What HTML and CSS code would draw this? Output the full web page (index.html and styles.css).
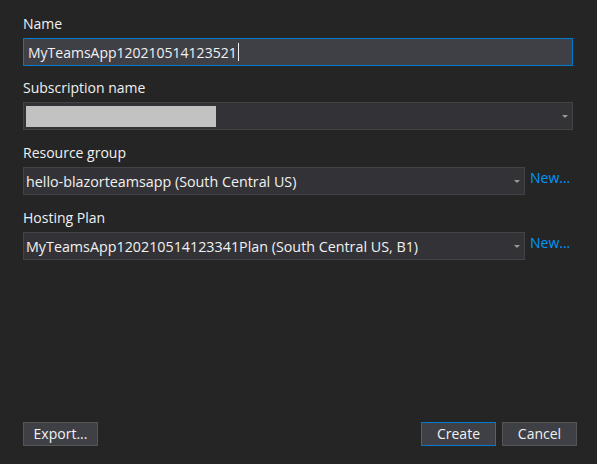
FILE: index.html
```html
<!DOCTYPE html>
<html lang="en">
<head>
<meta charset="utf-8">
<title>Create App Service</title>
<link rel="stylesheet" href="styles.css">
</head>
<body>
<div class="dialog">
  <div class="fields">
    <div class="field">
      <label class="label">Name</label>
      <div class="textbox"><span class="value">MyTeamsApp120210514123521</span><span class="caret"></span></div>
    </div>
    <div class="field">
      <label class="label">Subscription name</label>
      <div class="row">
        <div class="combo combo-wide">
          <span class="redacted"></span>
          <span class="arrow"></span>
        </div>
      </div>
    </div>
    <div class="field field-spaced">
      <label class="label">Resource group</label>
      <div class="row">
        <div class="combo">
          <span class="value">hello-blazorteamsapp (South Central US)</span>
          <span class="arrow"></span>
        </div>
        <a class="link">New...</a>
      </div>
    </div>
    <div class="field field-spaced">
      <label class="label">Hosting Plan</label>
      <div class="row">
        <div class="combo">
          <span class="value">MyTeamsApp120210514123341Plan (South Central US, B1)</span>
          <span class="arrow"></span>
        </div>
        <a class="link">New...</a>
      </div>
    </div>
  </div>
  <div class="buttons">
    <button class="btn">Export...</button>
    <div class="spacer"></div>
    <button class="btn btn-default">Create</button>
    <button class="btn">Cancel</button>
  </div>
</div>
</body>
</html>
```
FILE: styles.css
```css
html, body {
  margin: 0;
  padding: 0;
  background: #252526;
}
body {
  width: 597px;
  height: 464px;
  overflow: hidden;
  font-family: "Open Sans", "Noto Sans", sans-serif;
  font-size: 14px;
  color: #f1f1f1;
}
.dialog {
  box-sizing: border-box;
  height: 464px;
  display: flex;
  flex-direction: column;
  padding: 13px 20px 18px 23px;
}
.fields {
  display: flex;
  flex-direction: column;
  gap: 11px;
}
.field {
  display: flex;
  flex-direction: column;
  gap: 4px;
}
.field-spaced {
  margin-top: 1px;
}
.label {
  display: block;
  height: 21px;
  line-height: 21px;
  color: #f1f1f1;
}
.textbox {
  box-sizing: border-box;
  width: 550px;
  height: 28px;
  background: #3f3f46;
  border: 1px solid #007acc;
  display: flex;
  align-items: center;
  padding-left: 4px;
}
.caret {
  width: 1px;
  height: 18px;
  background: #f1f1f1;
  margin-left: 1px;
}
.row {
  display: flex;
  align-items: flex-start;
  gap: 5px;
}
.combo {
  box-sizing: border-box;
  width: 502px;
  height: 28px;
  background: #333337;
  border: 1px solid #434346;
  display: flex;
  align-items: center;
  padding-left: 2px;
  font-size: 14.3px;
}
.combo-wide {
  width: 550px;
}
.combo .value {
  white-space: nowrap;
}
.redacted {
  width: 190px;
  height: 21px;
  background: #c2c2c2;
}
.arrow {
  margin-left: auto;
  margin-right: 4px;
  width: 0;
  height: 0;
  border-left: 3px solid transparent;
  border-right: 3px solid transparent;
  border-top: 3px solid #999999;
}
.link {
  color: #0097fb;
  line-height: 20px;
  margin-top: 1px;
}
.buttons {
  margin-top: auto;
  display: flex;
  align-items: center;
  gap: 6px;
}
.spacer {
  flex: 1;
}
.btn {
  box-sizing: border-box;
  width: 75px;
  height: 24px;
  background: #3f3f46;
  border: 1px solid #555555;
  color: #f1f1f1;
  font-family: "Open Sans", "Noto Sans", sans-serif;
  font-size: 14px;
  padding: 0;
  line-height: 20px;
}
.btn-default {
  border-color: #007acc;
}
```
